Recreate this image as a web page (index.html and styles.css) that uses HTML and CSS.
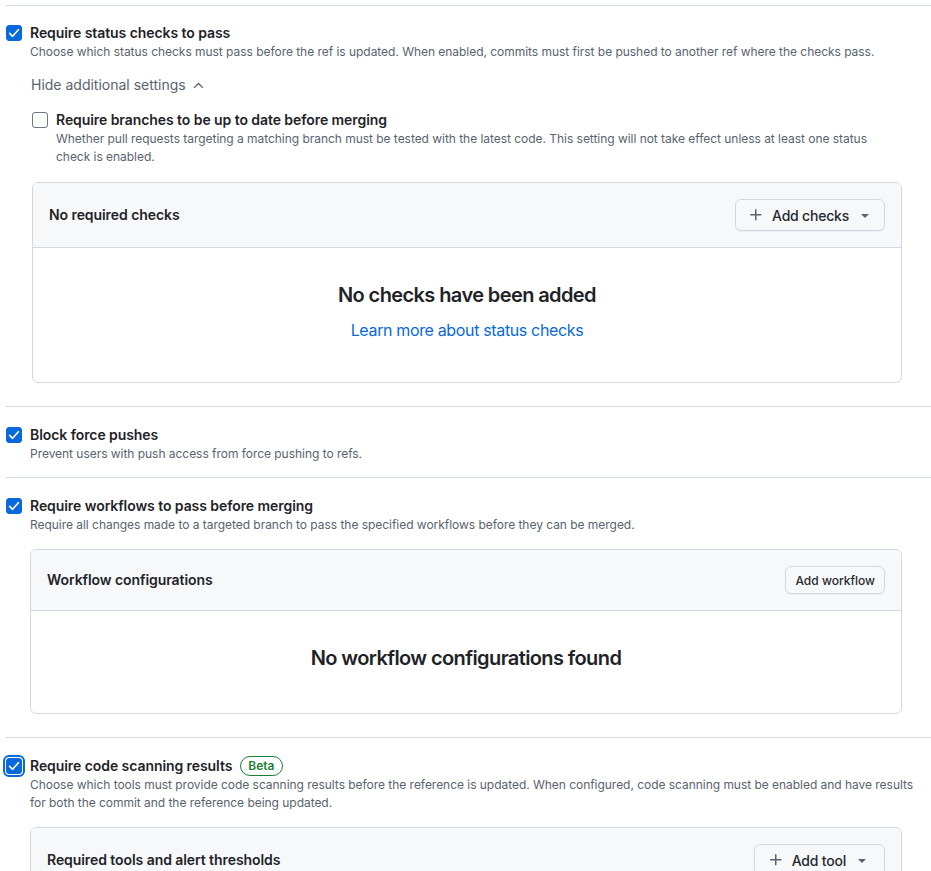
FILE: index.html
```html
<!DOCTYPE html>
<html lang="en">
<head>
<meta charset="utf-8">
<title>Branch protection rules</title>
<link rel="stylesheet" href="styles.css">
</head>
<body>
<div class="page">

  <section class="rule rule--box">
    <div class="option">
      <span class="checkbox checked"><svg viewBox="0 0 16 16" width="16" height="16"><polyline points="3.6,8.4 6.6,11.3 12.4,4.7" /></svg></span>
      <div class="option-main">
        <div class="option-title">Require status checks to pass</div>
        <div class="option-desc">Choose which status checks must pass before the ref is updated. When enabled, commits must first be pushed to another ref where the checks pass.</div>
        <div class="toggle">Hide additional settings
          <svg class="chev" viewBox="0 0 16 16" width="16" height="16"><path d="M3.22 10.53a.749.749 0 0 1 0-1.06l4.25-4.25a.749.749 0 0 1 1.06 0l4.25 4.25a.749.749 0 0 1-1.06 1.06L8 6.811 4.28 10.53a.749.749 0 0 1-1.06 0Z"/></svg>
        </div>
        <div class="option option--sub">
          <span class="checkbox"></span>
          <div class="option-main">
            <div class="option-title">Require branches to be up to date before merging</div>
            <div class="option-desc">Whether pull requests targeting a matching branch must be tested with the latest code. This setting will not take effect unless at least one status check is enabled.</div>
          </div>
        </div>
        <div class="box box--nested">
          <div class="box-header">
            <span class="box-title">No required checks</span>
            <button class="btn">
              <svg class="ico" viewBox="0 0 16 16" width="16" height="16"><path d="M7.75 2a.75.75 0 0 1 .75.75V7h4.25a.75.75 0 0 1 0 1.5H8.5v4.25a.75.75 0 0 1-1.5 0V8.5H2.75a.75.75 0 0 1 0-1.5H7V2.75A.75.75 0 0 1 7.75 2Z"/></svg>
              <span>Add checks</span>
              <svg class="ico" viewBox="0 0 16 16" width="16" height="16"><path d="m4.427 7.427 3.396 3.396a.25.25 0 0 0 .354 0l3.396-3.396A.25.25 0 0 0 11.396 7H4.604a.25.25 0 0 0-.177.427Z"/></svg>
            </button>
          </div>
          <div class="box-body">
            <h3 class="blank-title">No checks have been added</h3>
            <a class="blank-link" href="#">Learn more about status checks</a>
          </div>
        </div>
      </div>
    </div>
  </section>

  <section class="rule rule--text">
    <div class="option">
      <span class="checkbox checked"><svg viewBox="0 0 16 16" width="16" height="16"><polyline points="3.6,8.4 6.6,11.3 12.4,4.7" /></svg></span>
      <div class="option-main">
        <div class="option-title">Block force pushes</div>
        <div class="option-desc">Prevent users with push access from force pushing to refs.</div>
      </div>
    </div>
  </section>

  <section class="rule rule--box">
    <div class="option">
      <span class="checkbox checked"><svg viewBox="0 0 16 16" width="16" height="16"><polyline points="3.6,8.4 6.6,11.3 12.4,4.7" /></svg></span>
      <div class="option-main">
        <div class="option-title">Require workflows to pass before merging</div>
        <div class="option-desc">Require all changes made to a targeted branch to pass the specified workflows before they can be merged.</div>
        <div class="box box--wf">
          <div class="box-header box-header--sm">
            <span class="box-title">Workflow configurations</span>
            <button class="btn btn--sm">Add workflow</button>
          </div>
          <div class="box-body">
            <h3 class="blank-title">No workflow configurations found</h3>
          </div>
        </div>
      </div>
    </div>
  </section>

  <section class="rule rule--box">
    <div class="option">
      <span class="checkbox checked focused"><svg viewBox="0 0 16 16" width="16" height="16"><polyline points="3.6,8.4 6.6,11.3 12.4,4.7" /></svg></span>
      <div class="option-main">
        <div class="option-title option-title--badge">Require code scanning results <span class="badge">Beta</span></div>
        <div class="option-desc">Choose which tools must provide code scanning results before the reference is updated. When configured, code scanning must be enabled and have results for both the commit and the reference being updated.</div>
        <div class="box box--tools">
          <div class="box-header">
            <span class="box-title">Required tools and alert thresholds</span>
            <button class="btn btn--tool">
              <svg class="ico" viewBox="0 0 16 16" width="16" height="16"><path d="M7.75 2a.75.75 0 0 1 .75.75V7h4.25a.75.75 0 0 1 0 1.5H8.5v4.25a.75.75 0 0 1-1.5 0V8.5H2.75a.75.75 0 0 1 0-1.5H7V2.75A.75.75 0 0 1 7.75 2Z"/></svg>
              <span>Add tool</span>
              <svg class="ico" viewBox="0 0 16 16" width="16" height="16"><path d="m4.427 7.427 3.396 3.396a.25.25 0 0 0 .354 0l3.396-3.396A.25.25 0 0 0 11.396 7H4.604a.25.25 0 0 0-.177.427Z"/></svg>
            </button>
          </div>
          <div class="box-body box-body--empty"></div>
        </div>
      </div>
    </div>
  </section>

</div>
</body>
</html>
```
FILE: styles.css
```css
* { box-sizing: border-box; }

html, body {
  margin: 0;
  padding: 0;
  background: #ffffff;
  overflow: hidden;
}

body {
  font-family: Inter, "Noto Sans", "Liberation Sans", sans-serif;
  color: #1f2328;
  font-size: 14px;
  line-height: 20px;
}

.page {
  padding: 5px 0 0 6px;
  height: 871px;
  overflow: hidden;
}

.rule {
  border-top: 1px solid #d1d9e0;
  padding-top: 17px;
}
.rule + .rule { padding-top: 18px; }
.rule--box { padding-bottom: 23px; }
.rule--text { padding-bottom: 14px; }

.option {
  display: grid;
  grid-template-columns: 16px 1fr;
  column-gap: 8px;
  align-items: start;
}

.option--sub {
  margin-top: 15px;
  margin-left: 2px;
  margin-right: 29px;
}

.checkbox {
  width: 16px;
  height: 16px;
  margin-top: 2px;
  border: 1px solid #6e7781;
  border-radius: 3px;
  background: #ffffff;
  display: block;
}
.checkbox.checked {
  background: #0969da;
  border-color: #0969da;
}
.checkbox svg {
  display: block;
  margin: -1px;
  fill: none;
  stroke: #ffffff;
  stroke-width: 1.6;
  stroke-linecap: round;
  stroke-linejoin: round;
}
.checkbox.focused {
  outline: 2px solid #0969da;
  outline-offset: 1px;
}

.option-main { min-width: 0; }

.option-title {
  font-weight: 600;
  font-size: 14px;
  line-height: 20px;
  color: #1f2328;
  letter-spacing: -0.005em;
}
.option-title--badge {
  display: flex;
  align-items: center;
  gap: 8px;
}

.badge {
  display: inline-flex;
  align-items: center;
  height: 20px;
  padding: 0 7px;
  border: 1px solid #1a7f37;
  border-radius: 10px;
  color: #1a7f37;
  font-size: 12px;
  font-weight: 600;
  line-height: 18px;
  letter-spacing: 0;
}

.option-desc {
  font-size: 12px;
  line-height: 18px;
  color: #59636e;
  letter-spacing: -0.003em;
}

.toggle {
  margin-top: 14px;
  margin-left: 1px;
  display: flex;
  align-items: center;
  gap: 5px;
  color: #59636e;
  font-size: 14px;
  line-height: 20px;
}
.chev {
  width: 15px;
  height: 15px;
  fill: #59636e;
}

.box {
  margin-top: 16px;
  margin-right: 29px;
  border: 1px solid #d1d9e0;
  border-radius: 6px;
  overflow: hidden;
}
.box--nested { margin-left: 2px; }
.box--wf { margin-top: 15px; }
.box--tools { margin-top: 15px; }

.box-header {
  display: flex;
  align-items: center;
  justify-content: space-between;
  padding: 16px;
  background: #f6f8fa;
  border-bottom: 1px solid #d1d9e0;
}

.box-title {
  font-weight: 600;
  font-size: 14px;
  color: #1f2328;
  letter-spacing: -0.005em;
}

.btn {
  display: inline-flex;
  align-items: center;
  gap: 8px;
  height: 32px;
  padding: 0 11px 0 12px;
  font-family: inherit;
  font-size: 14px;
  font-weight: 500;
  letter-spacing: -0.015em;
  color: #25292e;
  background: #f6f8fa;
  border: 1px solid #d1d9e0;
  border-radius: 6px;
  box-shadow: 0 1px 0 rgba(31, 35, 40, 0.04);
}
.btn--sm {
  height: 28px;
  padding: 0 9px;
  font-size: 12px;
  letter-spacing: 0;
}
.btn--tool { padding-left: 13px; padding-right: 14px; }

.ico {
  width: 16px;
  height: 16px;
  fill: #59636e;
  flex: none;
}

.box-body {
  padding: 32px 16px 40px;
  text-align: center;
}
.box-body--empty { height: 102px; }

.blank-title {
  margin: 0;
  font-size: 20px;
  line-height: 30px;
  font-weight: 600;
  color: #1f2328;
  letter-spacing: -0.03em;
}

.blank-link {
  display: inline-block;
  margin-top: 8px;
  font-size: 16px;
  line-height: 24px;
  color: #0969da;
  text-decoration: none;
  letter-spacing: -0.022em;
}
```
